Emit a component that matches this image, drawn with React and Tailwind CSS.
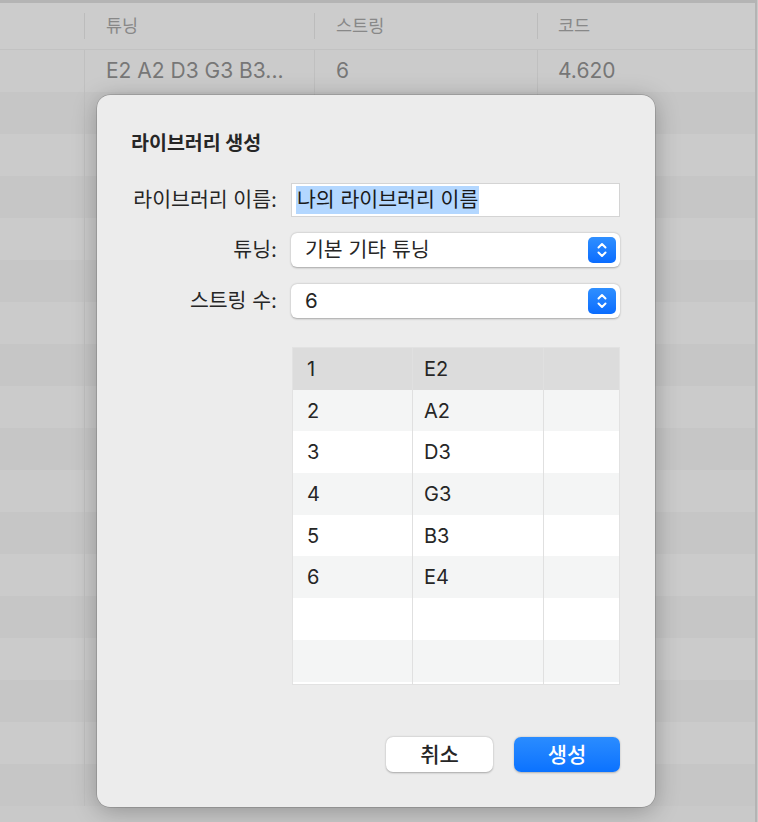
import React from 'react'

const font = { fontFamily: 'Inter, "Noto Sans CJK KR", sans-serif' }

const bgRows = Array.from({ length: 18 }, (_, i) => i)

const strings = [
  { no: '1', note: 'E2' },
  { no: '2', note: 'A2' },
  { no: '3', note: 'D3' },
  { no: '4', note: 'G3' },
  { no: '5', note: 'B3' },
  { no: '6', note: 'E4' },
  { no: '', note: '' },
  { no: '', note: '' },
]

const Stepper = () => (
  <div className="w-[28px] h-[26px] rounded-[5px] bg-gradient-to-b from-[#2f8fff] to-[#0a6cff] flex items-center justify-center">
    <svg width="12" height="18" viewBox="0 0 12 18" fill="none" stroke="white" strokeWidth="2" strokeLinecap="round" strokeLinejoin="round">
      <path d="M2.5 6.5 L6 3 L9.5 6.5" />
      <path d="M2.5 11.5 L6 15 L9.5 11.5" />
    </svg>
  </div>
)

const PopupRow = ({ label, value }) => (
  <div className="flex items-center">
    <div className="w-[194px] text-right text-[20.5px] text-[#262626] pr-[14px]">{label}</div>
    <div className="w-[329px] h-[34px] bg-white rounded-[6px] shadow-[0_0.5px_2px_rgba(0,0,0,0.3)] flex items-center justify-between pl-[14px] pr-[4px]">
      <span className="text-[20.5px] text-[#262626]">{value}</span>
      <Stepper />
    </div>
  </div>
)

const App = () => {
  return (
    <div className="relative w-[758px] h-[822px] overflow-hidden bg-[#c9c9c9]" style={font}>
      {/* background list */}
      <div className="border-t-[3px] border-[#b4b4b4] border-r-[2px] w-[757px] h-full">
        <div className="flex h-[47px] items-center text-[17.5px] text-[#888888] bg-[#cccccc] border-b border-[#c2c2c2]">
          <div className="w-[85px] h-[26px] border-r border-[#bcbcbc]"></div>
          <div className="w-[230px] h-[26px] border-r border-[#bcbcbc] pl-[21px] leading-[26px]">튜닝</div>
          <div className="w-[223px] h-[26px] border-r border-[#bcbcbc] pl-[21px] leading-[26px]">스트링</div>
          <div className="pl-[20px] leading-[26px]">코드</div>
        </div>
        {bgRows.map((i) => (
          <div key={i} className={`flex h-[42px] items-center text-[21px] text-[#777777] ${i % 2 === 0 ? 'bg-[#cbcbcb]' : 'bg-[#c6c6c6]'}`}>
            <div className="w-[85px] h-full border-r border-[#c0c0c0]"></div>
            <div className="w-[230px] h-full border-r border-[#c0c0c0] pl-[21px] flex items-center">{i === 0 ? 'E2 A2 D3 G3 B3...' : ''}</div>
            <div className="w-[223px] h-full border-r border-[#c0c0c0] pl-[21px] flex items-center">{i === 0 ? '6' : ''}</div>
            <div className="pl-[20px] flex items-center">{i === 0 ? '4.620' : ''}</div>
          </div>
        ))}
      </div>

      {/* sheet */}
      <div className="absolute left-[97px] top-[95px] w-[558px] h-[712px] bg-[#ececec] rounded-[13px] shadow-[0_4px_24px_rgba(0,0,0,0.28),0_0_0_0.5px_rgba(0,0,0,0.25)] pt-[34px]">
        <h1 className="pl-[34px] text-[19.5px] font-bold text-[#262626] leading-[28px]">라이브러리 생성</h1>

        <div className="flex items-center mt-[26px]">
          <div className="w-[194px] text-right text-[20.5px] text-[#262626] pr-[14px]">라이브러리 이름:</div>
          <div className="w-[329px] h-[34px] bg-white border border-[#d4d4d4] flex items-center pl-[4px]">
            <span className="text-[20.5px] text-[#1a1a1a] bg-[#b3d7ff] leading-[28px] px-[1px]">나의 라이브러리 이름</span>
          </div>
        </div>

        <div className="mt-[16px]">
          <PopupRow label="튜닝:" value="기본 기타 튜닝" />
        </div>
        <div className="mt-[17px]">
          <PopupRow label="스트링 수:" value="6" />
        </div>

        <div className="ml-[195px] mt-[29px] w-[328px] h-[338px] overflow-hidden bg-white border border-[#e2e2e2]">
          {strings.map((s, i) => (
            <div key={i} className={`flex h-[41.7px] text-[20px] text-[#262626] ${i === 0 ? 'bg-[#dcdcdc]' : i % 2 === 1 ? 'bg-[#f4f5f5]' : 'bg-white'}`}>
              <div className="w-[120px] border-r border-[#e0e0e0] pl-[14px] flex items-center">{s.no}</div>
              <div className="w-[131px] border-r border-[#e0e0e0] pl-[11px] flex items-center">{s.note}</div>
              <div className="flex-1"></div>
            </div>
          ))}
          <div className="flex h-[10px] bg-white">
            <div className="w-[120px] border-r border-[#e0e0e0]"></div>
            <div className="w-[131px] border-r border-[#e0e0e0]"></div>
          </div>
        </div>

        <div className="flex justify-end gap-[21px] pr-[35px] mt-[52px]">
          <button className="w-[107px] h-[35px] rounded-[7px] bg-white shadow-[0_0.5px_2px_rgba(0,0,0,0.3)] text-[21px] text-[#262626] font-medium">취소</button>
          <button className="w-[106px] h-[35px] rounded-[7px] bg-gradient-to-b from-[#2a8cff] to-[#0a72ff] shadow-[0_0.5px_2px_rgba(0,0,0,0.25)] text-[21px] text-white font-medium">생성</button>
        </div>
      </div>
    </div>
  )
}

export default App
